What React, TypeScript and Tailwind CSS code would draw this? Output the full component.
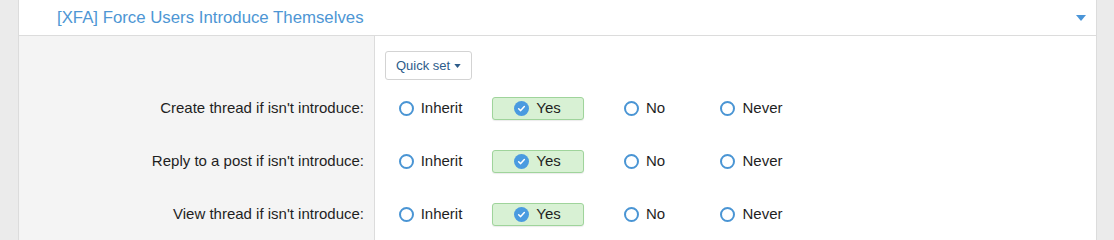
import React from 'react';

const options = ['Inherit', 'Yes', 'No', 'Never'];

const rows = [
  'Create thread if isn\'t introduce:',
  'Reply to a post if isn\'t introduce:',
  'View thread if isn\'t introduce:',
];

function Radio({ checked }: { checked: boolean }) {
  if (checked) {
    return (
      <span className="flex h-[15px] w-[15px] items-center justify-center rounded-full bg-[#4a9be0]">
        <svg viewBox="0 0 12 12" className="h-[9px] w-[9px]">
          <path d="M2.2 6.3 L4.9 8.8 L9.8 3.4" fill="none" stroke="#fff" strokeWidth="2" strokeLinecap="round" strokeLinejoin="round" />
        </svg>
      </span>
    );
  }
  return <span className="h-[15px] w-[15px] rounded-full border-2 border-[#4a95d4] bg-white" />;
}

function OptionRow({ label }: { label: string }) {
  return (
    <div className="flex h-[53px]">
      <div className="flex w-[356px] items-center justify-end border-r border-[#dcdcdc] bg-[#f4f4f4] pr-[10px] text-[15px] text-[#1f1f1f]">
        {label}
      </div>
      <div className="flex flex-1 items-center pl-[2px]">
        {options.map(opt => {
          const on = opt === 'Yes';
          return (
            <div key={opt} className="flex w-[107px] justify-center">
              <div
                className={`flex h-[23px] items-center justify-center gap-[7px] rounded-[3px] ${
                  on ? 'w-[92px] border border-[#9fd49b] bg-[#d8f1d4] shadow-[0_1px_1px_rgba(0,0,0,0.08)]' : ''
                }`}
              >
                <Radio checked={on} />
                <span className="text-[15px] text-[#1f1f1f]">{opt}</span>
              </div>
            </div>
          );
        })}
      </div>
    </div>
  );
}

export default function App() {
  return (
    <div className="h-[240px] w-[1114px] overflow-hidden bg-[#ebebeb] pl-[18px] pr-[17px] font-['Liberation_Sans',Arial,sans-serif]">
      <div className="h-full border-x border-[#dcdcdc] bg-white">
        {/* Header */}
        <div className="flex h-[36px] items-center justify-between border-b border-[#dcdcdc] pl-[38px] pr-[10px]">
          <span className="text-[16.8px] text-[#4d96d4]">[XFA] Force Users Introduce Themselves</span>
          <svg viewBox="0 0 10 6" className="h-[6px] w-[10px]">
            <path d="M0 0 H10 L5 6 Z" fill="#4a95d8" />
          </svg>
        </div>

        {/* Quick set */}
        <div className="flex h-[46px]">
          <div className="w-[356px] border-r border-[#dcdcdc] bg-[#f4f4f4]" />
          <div className="flex flex-1 items-start pl-[10px] pt-[15px]">
            <button className="flex h-[29px] items-center gap-[4px] rounded-[3px] border border-[#d3d3d3] bg-white px-[10px] text-[13px] text-[#2d5c8a]">
              Quick set
              <svg viewBox="0 0 8 5" className="h-[4px] w-[7px]">
                <path d="M0 0 H8 L4 5 Z" fill="#2d5c8a" />
              </svg>
            </button>
          </div>
        </div>

        {rows.map(r => (
          <OptionRow key={r} label={r} />
        ))}
      </div>
    </div>
  );
}
